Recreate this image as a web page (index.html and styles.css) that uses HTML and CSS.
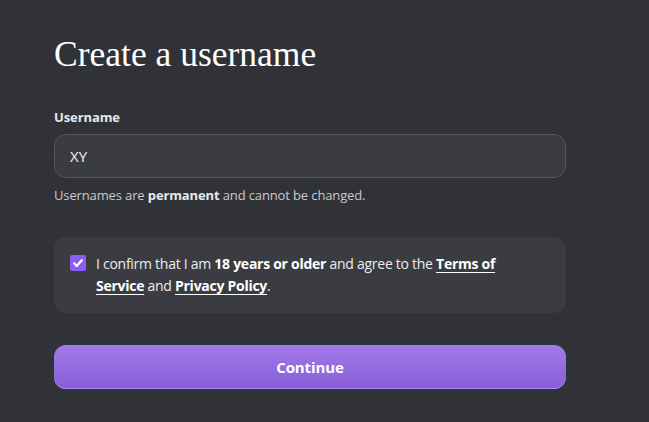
FILE: index.html
```html
<!DOCTYPE html>
<html>
<head>
<meta charset="utf-8">
<link rel="stylesheet" href="styles.css">
</head>
<body>
<main class="page">
  <h1 class="title">Create a username</h1>
  <label class="label" for="u">Username</label>
  <div class="input">XY</div>
  <p class="hint">Usernames are <b>permanent</b> and cannot be changed.</p>
  <div class="card">
    <span class="check"><svg width="12" height="12" viewBox="0 0 12 12"><path d="M2.2 6.3 L4.8 8.9 L9.8 3.2" fill="none" stroke="#fff" stroke-width="2.2" stroke-linecap="round" stroke-linejoin="round"/></svg></span>
    <p class="confirm">I confirm that I am <b>18 years or older</b> and agree to the <a href="#">Terms of Service</a> and <a href="#">Privacy Policy</a>.</p>
  </div>
  <button class="btn">Continue</button>
</main>
</body>
</html>
```
FILE: styles.css
```css
html, body { margin: 0; padding: 0; }
body {
  background: #313237;
  font-family: "Open Sans", "Noto Sans", sans-serif;
  color: #e6e6ea;
  width: 649px;
  height: 422px;
  overflow: hidden;
}
.page {
  width: 512px;
  padding: 34px 0 0 54px;
  display: flex;
  flex-direction: column;
}
.title {
  margin: 0;
  font-family: "Liberation Serif", serif;
  font-weight: 400;
  font-size: 35.5px;
  line-height: 40px;
  color: #ffffff;
}
.label {
  margin-top: 34px;
  font-size: 13px;
  font-weight: 700;
  line-height: 18px;
  color: #e8e8ec;
  letter-spacing: -0.1px;
}
.input {
  margin-top: 8px;
  height: 42px;
  border: 1px solid #55565c;
  border-radius: 12px;
  background: #3b3c42;
  display: flex;
  align-items: center;
  padding: 0 15px;
  font-size: 15px;
  color: #f2f2f4;
}
.hint {
  margin: 8px 0 0;
  font-size: 13px;
  line-height: 18px;
  color: #c9cace;
  letter-spacing: -0.13px;
}
.hint b { color: #e8e8ec; font-weight: 700; }
.card {
  margin-top: 33px;
  background: #3b3c41;
  border-radius: 12px;
  padding: 18px 16px 16px;
  display: flex;
  gap: 10px;
  align-items: flex-start;
}
.check {
  flex: none;
  width: 16px;
  height: 16px;
  border-radius: 2px;
  background: #8b5cf6;
  display: flex;
  align-items: center;
  justify-content: center;
}
.confirm {
  margin: -2px 0 0;
  font-size: 14px;
  line-height: 22px;
  color: #ececf0;
  width: 420px;
  letter-spacing: -0.27px;
}
.confirm b { font-weight: 700; color: #fff; }
.confirm a { color: #fff; font-weight: 700; text-decoration: underline; text-underline-offset: 3px; }
.btn {
  margin-top: 32px;
  height: 44px;
  border: none;
  border-radius: 12px;
  background: linear-gradient(#a17ae9, #875ed8);
  box-shadow: inset 0 -1px 0 #a78bfa;
  color: #fff;
  font-family: inherit;
  font-size: 15px;
  font-weight: 700;
  letter-spacing: -0.1px;
}
```
